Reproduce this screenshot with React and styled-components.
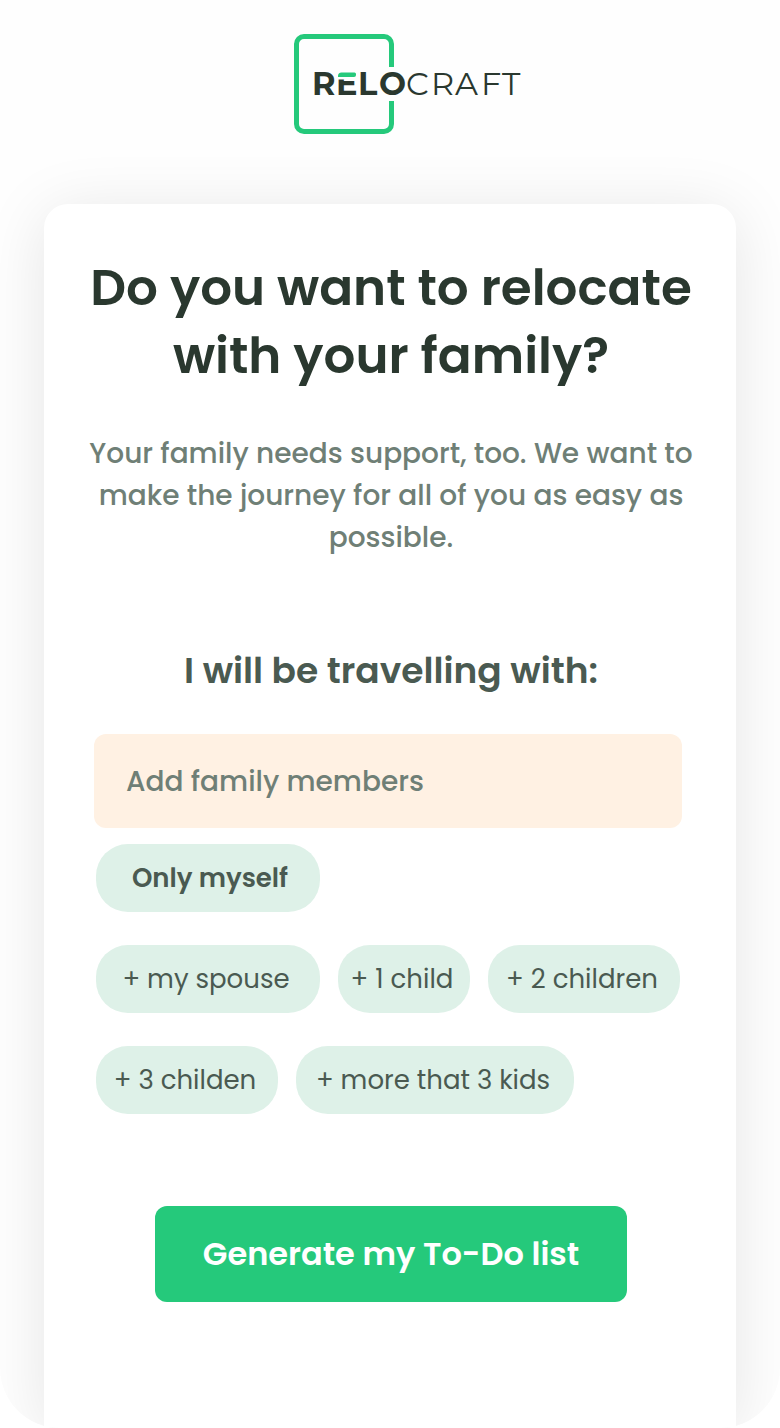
import React, { useState } from "react";
import styled, { createGlobalStyle } from "styled-components";

const GlobalStyle = createGlobalStyle`
  *, *::before, *::after {
    box-sizing: border-box;
  }

  body {
    margin: 0;
    background: #ffffff;
    font-family: Poppins, Inter, "Liberation Sans", sans-serif;
  }

  button, input {
    font-family: inherit;
  }
`;

const Screen = styled.div`
  display: flex;
  flex-direction: column;
  min-height: 100vh;
  overflow: hidden;
  border-radius: 0 0 60px 60px;
  background: #fefefe;
`;

const Header = styled.header`
  display: flex;
  justify-content: center;
  padding: 32px 0 68px 34px;
`;

const LogoLink = styled.a`
  display: block;
  height: 104px;
`;

const Card = styled.main`
  display: flex;
  flex-direction: column;
  flex: 1;
  margin: 0 44px;
  padding: 50px 32px 124px 34px;
  border-radius: 24px 24px 0 0;
  background: #ffffff;
  box-shadow: 0 8px 64px rgba(0, 0, 0, 0.1);
  text-align: center;
`;

const Heading = styled.h1`
  margin: 0;
  color: #2a382f;
  font-size: 50px;
  font-weight: 600;
  line-height: 68px;
`;

const Intro = styled.p`
  margin: 43px 0 0;
  color: #6f7f76;
  font-size: 28px;
  font-weight: 500;
  line-height: 42px;
`;

const Form = styled.form`
  display: flex;
  flex-direction: column;
  margin-top: 84px;
`;

const Label = styled.label`
  color: #4a5a51;
  font-size: 36px;
  font-weight: 600;
  line-height: 56px;
`;

const Fields = styled.div`
  padding: 35px 22px 0 16px;
`;

const MemberInput = styled.input`
  display: block;
  width: 100%;
  height: 94px;
  padding: 2px 32px 0;
  border: 0;
  border-radius: 12px;
  background: #fff1e3;
  color: #6f7f76;
  font-size: 28px;
  font-weight: 500;

  &::placeholder {
    color: #6f7f76;
    opacity: 1;
  }
`;

const ChipList = styled.div`
  display: flex;
  flex-direction: column;
  gap: 33px;
  padding: 16px 2px 0;
`;

const ChipRow = styled.div`
  display: flex;
  gap: 18px;
`;

const Chip = styled.button`
  width: ${({ $width }) => $width}px;
  height: 68px;
  padding: ${({ $active }) => ($active ? "0 0 0 4px" : "0 4px 0 0")};
  border: 0;
  border-radius: 32px;
  background: #def1e8;
  color: #4a5a51;
  font-size: 26px;
  font-weight: ${({ $active }) => ($active ? 600 : 400)};
  white-space: nowrap;
  cursor: pointer;
`;

const SubmitButton = styled.button`
  align-self: center;
  height: 96px;
  margin-top: 92px;
  padding: 0 48px;
  border: 0;
  border-radius: 12px;
  background: #25c97b;
  color: #ffffff;
  font-size: 32px;
  font-weight: 600;
  cursor: pointer;
`;

const chipRows = [
  [{ label: "Only myself", width: 224 }],
  [
    { label: "+ my spouse", width: 224 },
    { label: "+ 1 child", width: 132 },
    { label: "+ 2 children", width: 192 },
  ],
  [
    { label: "+ 3 childen", width: 182 },
    { label: "+ more that 3 kids", width: 278 },
  ],
];

const Logo = () => (
  <svg width="230" height="104" viewBox="0 0 230 104" role="img" aria-label="Relocraft">
    <path
      d="M99.5 35V12a7.5 7.5 0 0 0-7.5-7.5H12A7.5 7.5 0 0 0 4.5 12v80a7.5 7.5 0 0 0 7.5 7.5h80a7.5 7.5 0 0 0 7.5-7.5V69"
      fill="none"
      stroke="#25c97b"
      strokeWidth="5"
    />
    <g fill="#2a382f" fontFamily="Montserrat, Inter, sans-serif" fontSize="32">
      <text x="20 44 66 87" y="63" fontWeight="700">RELO</text>
      <text x="114 139 163 189 210" y="63" fontWeight="400">CRAFT</text>
    </g>
    <rect x="44" y="38" width="23" height="9.5" fill="#fefefe" />
    <path d="M46 45v-1a3.500 3.500 0 0 1 3.500-3.500h13a1.500 1.500 0 0 1 1.500 1.500v1a2 2 0 0 1-2 2z" fill="#25c97b" />
  </svg>
);

const App = () => {
  const [selected, setSelected] = useState("Only myself");

  return (
    <>
      <GlobalStyle />
      <Screen>
        <Header>
          <LogoLink href="#">
            <Logo />
          </LogoLink>
        </Header>
        <Card>
          <Heading>
            Do you want to relocate
            <br />
            with your family?
          </Heading>
          <Intro>
            Your family needs support, too. We want to
            <br />
            make the journey for all of you as easy as
            <br />
            possible.
          </Intro>
          <Form onSubmit={(event) => event.preventDefault()}>
            <Label htmlFor="members">I will be travelling with:</Label>
            <Fields>
              <MemberInput id="members" type="text" placeholder="Add family members" />
              <ChipList>
                {chipRows.map((row, index) => (
                  <ChipRow key={index}>
                    {row.map((chip) => (
                      <Chip
                        key={chip.label}
                        type="button"
                        $width={chip.width}
                        $active={chip.label === selected}
                        onClick={() => setSelected(chip.label)}
                      >
                        {chip.label}
                      </Chip>
                    ))}
                  </ChipRow>
                ))}
              </ChipList>
            </Fields>
            <SubmitButton type="submit">Generate my To-Do list</SubmitButton>
          </Form>
        </Card>
      </Screen>
    </>
  );
};

export default App;
